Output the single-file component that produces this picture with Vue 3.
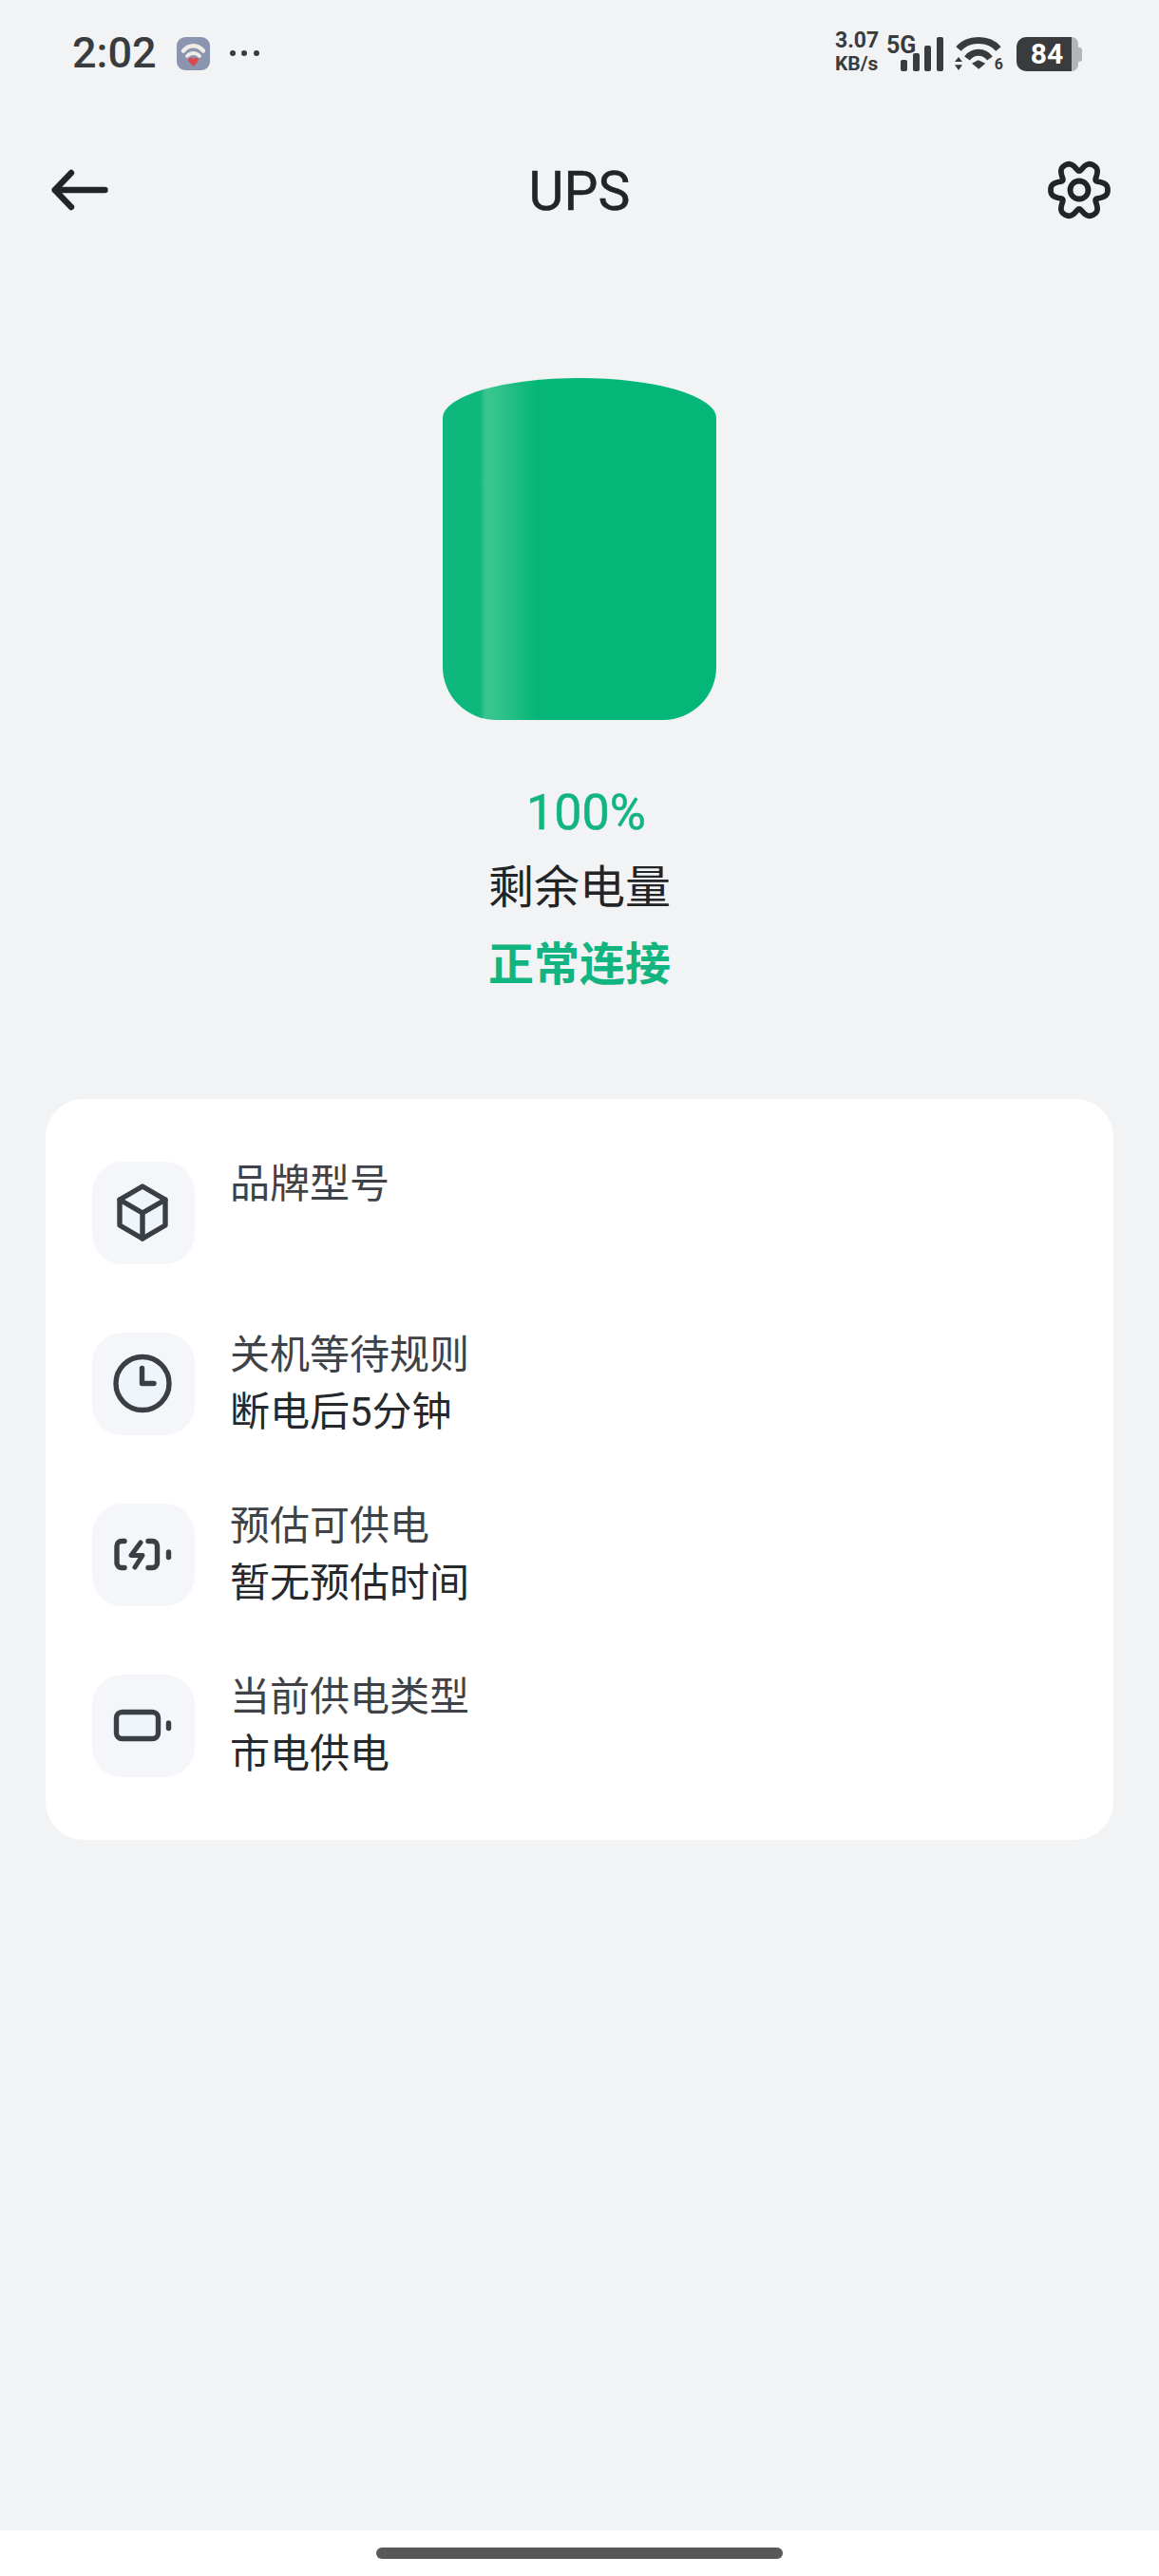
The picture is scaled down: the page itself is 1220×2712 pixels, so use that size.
<script setup>
const rows = [
  { icon: "box", label: "品牌型号", value: "" },
  { icon: "clock", label: "关机等待规则", value: "断电后5分钟" },
  { icon: "charge", label: "预估可供电", value: "暂无预估时间" },
  { icon: "battery", label: "当前供电类型", value: "市电供电" },
];

// gear outline: six broad lobes round the centre
const gearPath = (() => {
  const pts = [];
  for (let i = 0; i < 180; i++) {
    const a = (i / 180) * Math.PI * 2;
    const r = 26 + 5 * Math.cos(6 * a) - 1 * Math.cos(12 * a);
    pts.push((33 + r * Math.cos(a)).toFixed(2) + " " + (33 + r * Math.sin(a)).toFixed(2));
  }
  return "M" + pts.join("L") + "Z";
})();
</script>

<template>
  <div class="page">
    <!-- Status bar -->
    <div class="status-bar">
      <div class="status-left">
        <span class="time">2:02</span>
        <svg class="app-icon" viewBox="0 0 35 35">
          <rect width="35" height="35" rx="9" fill="#8b95af" />
          <path d="M7 14.500C13 7.500 22 7.500 28 14.500" fill="none" stroke="#f1ece4" stroke-width="4.400" stroke-linecap="round" />
          <path d="M11 20C15 16 20 16 24 20" fill="none" stroke="#f1ece4" stroke-width="3.800" stroke-linecap="round" />
          <path d="M17.500 31L12.500 25.500C11 22.500 15 20.500 17.500 23C20 20.500 24 22.500 22.500 25.500Z" fill="#d9494f" />
        </svg>
        <div class="dots"><i></i><i></i><i></i></div>
      </div>
      <div class="status-right">
        <div class="speed">
          <span>3.07</span>
          <span class="speed-unit">KB/s</span>
        </div>
        <div class="signal">
          <span class="net-type">5G</span>
          <i class="bar-1"></i><i class="bar-2"></i><i class="bar-3"></i><i class="bar-4"></i>
        </div>
        <div class="wifi">
          <svg viewBox="0 0 52 37" width="52" height="37">
            <path d="M4 13.500C14 1.500 36 1.500 46 13.500" fill="none" stroke="#3a3b3d" stroke-width="7" />
            <path d="M13 23.500C19 15 31 15 37 23.500" fill="none" stroke="#3a3b3d" stroke-width="7" />
            <path d="M18 28.700L24.700 25.300L32.300 28.700L25.300 34.700Z" fill="#3a3b3d" />
            <path d="M0 27L4 22L8 27ZM0 30.300H8L4 36Z" fill="#3a3b3d" />
          </svg>
          <span class="wifi-six">6</span>
        </div>
        <div class="battery">
          <div class="battery-body">84</div>
          <div class="battery-rest"></div>
          <div class="battery-nub"></div>
        </div>
      </div>
    </div>

    <!-- Header -->
    <div class="header">
      <svg class="back" viewBox="0 0 66 44" width="66" height="44">
        <path d="M24 4L6.700 22L24 40M6.700 22H59.500" fill="none" stroke="#222426" stroke-width="6.400" stroke-linecap="round" stroke-linejoin="round" />
      </svg>
      <h1 class="title">UPS</h1>
      <svg class="gear" viewBox="0 0 66 66" width="66" height="66">
        <path :d="gearPath" fill="none" stroke="#222426" stroke-width="5.800" stroke-linejoin="round" />
        <circle cx="33" cy="33" r="9.500" fill="none" stroke="#222426" stroke-width="5.800" />
      </svg>
    </div>

    <!-- Battery level -->
    <div class="cylinder"></div>
    <div class="level">100%</div>
    <div class="level-label">剩余电量</div>
    <div class="level-state">正常连接</div>

    <!-- Info card -->
    <div class="card">
      <div v-for="row in rows" :key="row.icon" class="row">
        <div class="icon-box">
          <svg viewBox="0 0 108 108" width="108" height="108" fill="none" stroke="#3a3f45" stroke-width="5.400" stroke-linecap="round" stroke-linejoin="round">
            <template v-if="row.icon === 'box'">
              <path d="M53 26L77 40V67L53 81L29 67V40Z" fill="#f0f4fb" />
              <path d="M29 40L53 54L77 40M53 54V81" />
            </template>
            <template v-else-if="row.icon === 'clock'">
              <circle cx="53" cy="53.500" r="28" fill="#f0f5fb" />
              <path d="M52.500 37.500V53.500H65" />
            </template>
            <template v-else-if="row.icon === 'charge'">
              <path d="M34 39.500H31A5 5 0 0 0 26 44.500V62.500A5 5 0 0 0 31 67.500H34M59 39.500H63.500A5 5 0 0 1 68.500 44.500V62.500A5 5 0 0 1 63.500 67.500H59" />
              <path d="M51 41L41 54.500H53L45 67" stroke-width="5" />
              <path d="M80.500 51V56.500" />
            </template>
            <template v-else>
              <rect x="25.500" y="39.500" width="44" height="28" rx="6" fill="#f0f5fb" />
              <path d="M80.500 51V56.500" />
            </template>
          </svg>
        </div>
        <div class="row-text">
          <div class="row-label">{{ row.label }}</div>
          <div class="row-value">{{ row.value }}</div>
        </div>
      </div>
    </div>

    <div class="spacer"></div>

    <!-- Gesture bar -->
    <div class="nav-area">
      <div class="nav-pill"></div>
    </div>
  </div>
</template>

<style scoped>
.page {
  width: 1220px;
  min-height: 2712px;
  display: flex;
  flex-direction: column;
  background: #f2f3f5;
  font-family: Roboto, "Noto Sans CJK SC", sans-serif;
}

/* Status bar */
.status-bar {
  height: 112px;
  box-sizing: border-box;
  padding: 0 81px 0 76px;
  display: flex;
  align-items: center;
  justify-content: space-between;
  color: #3a3b3d;
}

.status-left {
  display: flex;
  align-items: center;
}

.time {
  font-size: 45px;
  font-weight: 500;
  line-height: 56px;
}

.app-icon {
  width: 35px;
  height: 35px;
  margin-left: 21px;
}

.dots {
  display: flex;
  gap: 6.500px;
  margin-left: 21px;
}

.dots i {
  width: 6px;
  height: 6px;
  border-radius: 50%;
  background: #3a3b3d;
}

.status-right {
  display: flex;
  align-items: flex-end;
  height: 40px;
  margin-top: -2px;
}

.speed {
  display: flex;
  flex-direction: column;
  width: 69px;
  font-size: 23px;
  font-weight: 700;
  line-height: 25px;
  margin-bottom: -5px;
}

.speed-unit {
  font-size: 21px;
}

.signal {
  position: relative;
  display: flex;
  align-items: flex-end;
  gap: 5.700px;
  height: 36px;
}

.signal i {
  width: 7px;
  border-radius: 2px;
  background: #3a3b3d;
}

.bar-1 { height: 12px; }
.bar-2 { height: 19px; }
.bar-3 { height: 27px; }
.bar-4 { height: 36px; }

.net-type {
  position: absolute;
  left: -15px;
  top: -4px;
  font-size: 25px;
  font-weight: 700;
  line-height: 25px;
}

.wifi {
  position: relative;
  width: 52px;
  height: 37px;
  margin-left: 12px;
}

.wifi svg {
  display: block;
}

.wifi-six {
  position: absolute;
  right: 1px;
  bottom: -1px;
  font-size: 16px;
  font-weight: 700;
  line-height: 16px;
}

.battery {
  display: flex;
  align-items: center;
  height: 36px;
  margin-left: 13px;
}

.battery-body {
  width: 58px;
  height: 36px;
  box-sizing: border-box;
  padding-left: 6px;
  border-radius: 10px 0 0 10px;
  background: #3a3b3d;
  color: #fff;
  font-size: 30px;
  font-weight: 700;
  line-height: 36px;
  text-align: center;
}

.battery-rest {
  width: 7px;
  height: 36px;
  border-radius: 0 8px 8px 0;
  background: #b4b5b7;
}

.battery-nub {
  width: 4px;
  height: 15px;
  border-radius: 0 3px 3px 0;
  background: #b4b5b7;
}

/* Header */
.header {
  height: 176px;
  box-sizing: border-box;
  padding: 0 51px;
  display: flex;
  align-items: center;
  justify-content: space-between;
}

.back,
.gear {
  flex: none;
}

.title {
  margin: 3px 0 0;
  font-size: 57px;
  font-weight: 400;
  line-height: 70px;
  color: #222426;
  -webkit-text-stroke: 0.5px #222426;
}

/* Battery level */
.cylinder {
  align-self: center;
  width: 288px;
  height: 360px;
  margin-top: 110px;
  border-radius: 144px 144px 56px 56px / 42px 42px 56px 56px;
  background: linear-gradient(
    90deg,
    #0eb77b 0,
    #0eb77b 13.500%,
    #38c48e 15.500%,
    #3ac58f 17%,
    #27bf87 24%,
    #0fb87b 31%,
    #04b677 35%,
    #04b677 100%
  );
}

.level,
.level-label,
.level-state {
  text-align: center;
  line-height: 81px;
}

.level {
  margin-top: 57px;
  padding-left: 14px;
  font-size: 52px;
  font-weight: 400;
  color: #12b47f;
  -webkit-text-stroke: 0.5px #12b47f;
}

.level-label {
  margin-top: -2px;
  font-size: 48px;
  color: #232426;
}

.level-state {
  font-size: 48px;
  font-weight: 700;
  color: #12b47f;
}

/* Info card */
.card {
  margin: 101px 48px 0;
  padding: 60px 49px;
  display: flex;
  flex-direction: column;
  gap: 60px;
  background: #fff;
  border-radius: 40px;
}

.row {
  display: flex;
  align-items: center;
  gap: 37px;
  height: 120px;
}

.icon-box {
  flex: none;
  width: 108px;
  height: 108px;
  border-radius: 32px;
  background: #f5f6fa;
}

.icon-box svg {
  display: block;
}

.row-text {
  font-size: 42px;
  line-height: 60px;
}

.row-label {
  height: 60px;
  color: #3f4246;
}

.row-value {
  height: 60px;
  color: #26282b;
}

.spacer {
  flex: 1;
}

/* Gesture bar */
.nav-area {
  height: 48px;
  box-sizing: border-box;
  padding-top: 18px;
  background: #fff;
}

.nav-pill {
  width: 428px;
  height: 12px;
  margin: 0 auto;
  border-radius: 6px;
  background: #595959;
}
</style>
